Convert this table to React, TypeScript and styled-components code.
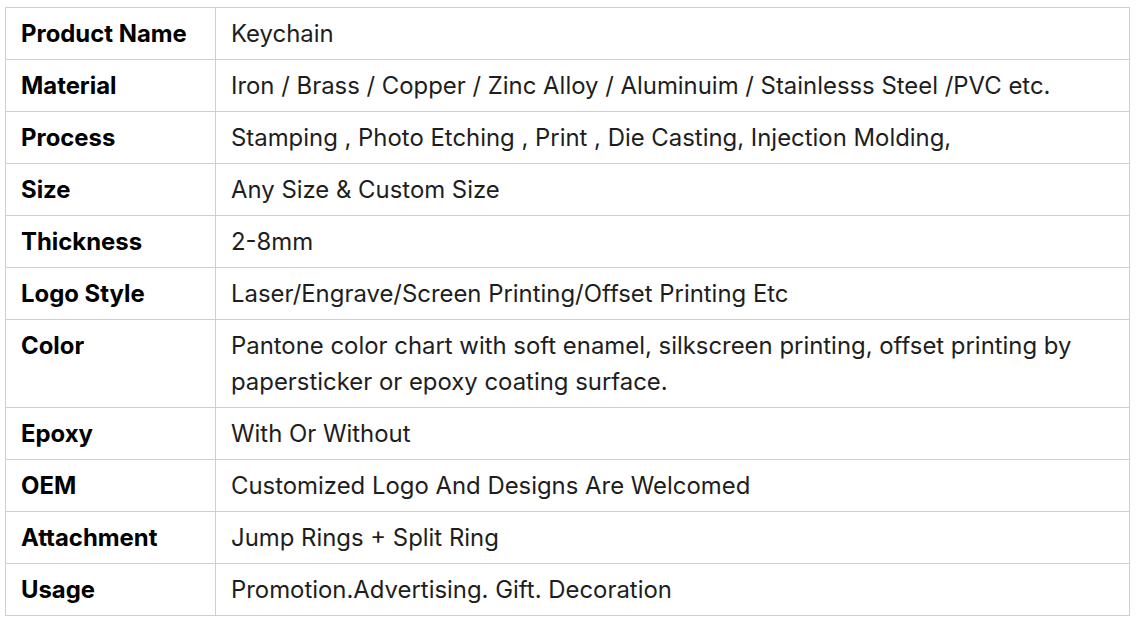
import styled, { createGlobalStyle } from "styled-components";

const GlobalStyle = createGlobalStyle`
  body {
    margin: 0;
    background: #fff;
    font-family: Inter, "Noto Sans", sans-serif;
  }
`;

const Page = styled.div`
  padding: 7px 0 0 5px;
`;

const Table = styled.table`
  width: 1125px;
  border-collapse: collapse;
  table-layout: fixed;
  font-size: 23.9px;
  line-height: 36px;
  color: #111;
`;

const Cell = styled.td<{ $head?: boolean }>`
  border: 1px solid #cfcfcf;
  padding: 8px 15px 7px;
  vertical-align: top;
  width: ${(p) => (p.$head ? "179px" : "auto")};
  font-weight: ${(p) => (p.$head ? 700 : 400)};
  color: ${(p) => (p.$head ? "#000" : "#1e1e1e")};
`;

const rows: [string, string][] = [
  ["Product Name", "Keychain"],
  ["Material", "Iron / Brass / Copper / Zinc Alloy / Aluminuim / Stainlesss Steel /PVC etc."],
  ["Process", "Stamping , Photo Etching , Print , Die Casting, Injection Molding,"],
  ["Size", "Any Size & Custom Size"],
  ["Thickness", "2-8mm"],
  ["Logo Style", "Laser/Engrave/Screen Printing/Offset Printing Etc"],
  [
    "Color",
    "Pantone color chart with soft enamel, silkscreen printing, offset printing by papersticker or epoxy coating surface.",
  ],
  ["Epoxy", "With Or Without"],
  ["OEM", "Customized Logo And Designs Are Welcomed"],
  ["Attachment", "Jump Rings + Split Ring"],
  ["Usage", "Promotion.Advertising. Gift. Decoration"],
];

const App = () => {
  return (
    <Page>
      <GlobalStyle />
      <Table>
        <tbody>
          {rows.map(([k, v]) => (
            <tr key={k}>
              <Cell $head>{k}</Cell>
              <Cell>{v}</Cell>
            </tr>
          ))}
        </tbody>
      </Table>
    </Page>
  );
};

export default App;
